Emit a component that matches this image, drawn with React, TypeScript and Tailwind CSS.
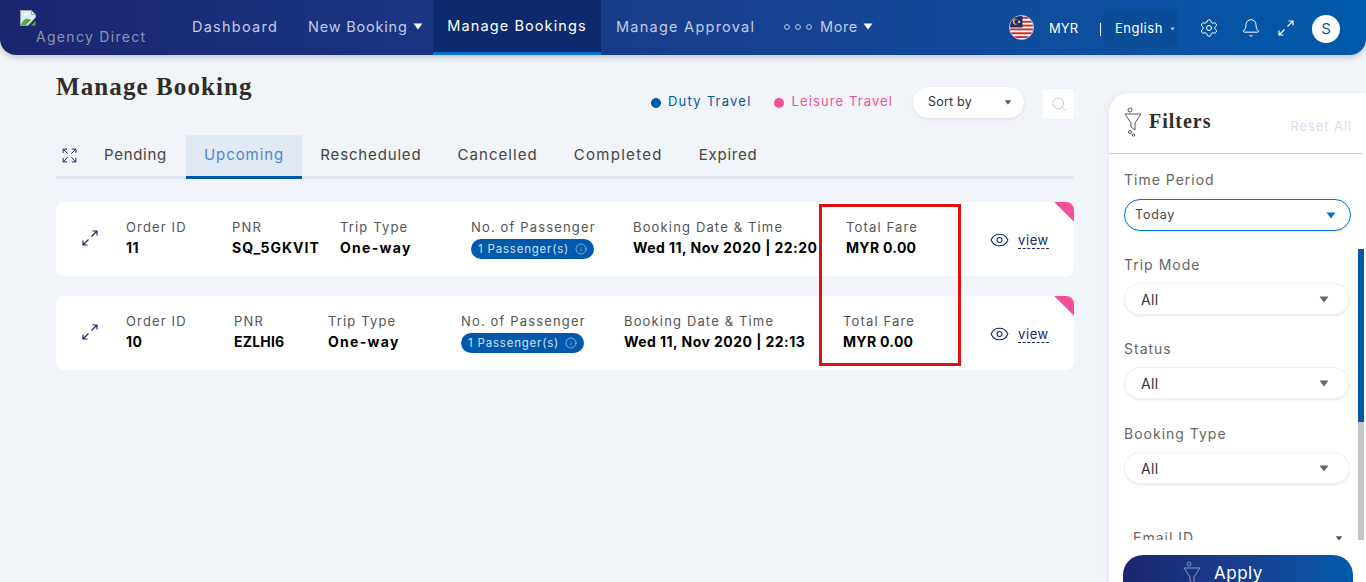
import React from 'react';
import { Search, Settings, Bell, Expand, Eye, Info } from 'lucide-react';

const Caret: React.FC<{ className?: string }> = ({ className }) => (
  <svg viewBox="0 0 10 7" className={className} fill="currentColor">
    <path d="M0.5 0.5h9L5 6.5z" />
  </svg>
);

const FunnelIcon: React.FC<{ className?: string }> = ({ className }) => (
  <svg viewBox="0 0 18 30" className={className} fill="none" stroke="currentColor" strokeWidth="1">
    <circle cx="6" cy="3" r="2" />
    <path d="M1 7h16l-6 9v7l-4-3v-4z" />
    <circle cx="6" cy="25" r="1.5" />
    <circle cx="9.5" cy="28" r="1.2" />
  </svg>
);

const SplitArrows: React.FC<{ className?: string }> = ({ className }) => (
  <svg viewBox="0 0 16 16" className={className} fill="none" stroke="currentColor" strokeWidth="1.2">
    <path d="M9.5 6.5L15 1M10.5 1H15v4.5" />
    <path d="M6.5 9.5L1 15M1 10.5V15h4.5" />
  </svg>
);

const BrokenImage = () => (
  <svg viewBox="0 0 16 16" className="h-4 w-4">
    <path d="M0.5 0.5h11l4 4v3L8 15.5H0.5z" fill="#dfe9f7" stroke="#a3a3a3" />
    <path d="M11.5 0.5v4h4z" fill="#fff" stroke="#a3a3a3" />
    <path d="M3 5c1-2 4-2 5 0z" fill="#fff" />
    <path d="M1 15c1-5 6-8 10-5l-5 5z" fill="#58a93c" />
    <path d="M11 15.5l4.5-5v5z" fill="#58a93c" />
  </svg>
);

const MalaysiaFlag = () => (
  <svg viewBox="0 0 24 24" className="h-[25px] w-[25px] -translate-y-[2px] rounded-full border border-gray-300">
    <rect width="24" height="24" fill="#fff" />
    {[0, 4, 8, 12, 16, 20].map(y => (
      <rect key={y} y={y + 1} width="24" height="2" fill="#cc2a2a" />
    ))}
    <rect width="13" height="12" fill="#1a2a6c" />
    <circle cx="6" cy="6" r="3" fill="#f4c430" />
    <circle cx="7" cy="6" r="2.4" fill="#1a2a6c" />
    <circle cx="9.5" cy="6" r="1.3" fill="#f4c430" />
  </svg>
);

const tabs = [
  { label: 'Pending', className: 'flex items-center pr-[19px] tracking-[0.7px] text-[#444]' },
  { label: 'Upcoming', className: '-mb-[3px] flex items-center border-b-[3px] border-[#0059ab] bg-[#e1e9f4] px-[18px] tracking-[0.95px] text-[#4f86d6]' },
  { label: 'Rescheduled', className: 'flex items-center px-[18px] tracking-[0.85px] text-[#444]' },
  { label: 'Cancelled', className: 'flex items-center px-[18px] tracking-[1.05px] text-[#444]' },
  { label: 'Completed', className: 'flex items-center px-[18px] tracking-[1.3px] text-[#444]' },
  { label: 'Expired', className: 'flex items-center px-[18px] tracking-[0.75px] text-[#444]' },
];

const rows = [
  {
    id: '11', pnr: 'SQ_5GKVIT', pnrClass: 'tracking-[1px]', date: 'Wed 11, Nov 2020 | 22:20',
    w: ['w-[106px]', 'w-[108px]', 'w-[131px]', 'w-[162px]', 'w-[213px]', 'w-[144px]'],
  },
  {
    id: '10', pnr: 'EZLHI6', pnrClass: 'tracking-[0.2px]', date: 'Wed 11, Nov 2020 | 22:13',
    w: ['w-[108px]', 'w-[94px]', 'w-[133px]', 'w-[163px]', 'w-[219px]', 'w-[147px]'],
  },
];

const Cell: React.FC<{ label: string; className: string; children: React.ReactNode }> = ({ label, className, children }) => (
  <div className={`${className} shrink-0 whitespace-nowrap pb-[4px]`}>
    <div className="text-[13px] leading-[20px] tracking-[1.15px] text-[#555]">{label}</div>
    <div className="h-[21px] text-[14px] leading-[21px] font-bold tracking-[0.45px] text-black">{children}</div>
  </div>
);

const FilterSelect: React.FC<{ label: string; className?: string }> = ({ label, className }) => (
  <div className={className}>
    <div className="text-[14px] leading-[20px] tracking-[1px] text-[#666]">{label}</div>
    <div className="mt-[8px] flex h-[33px] items-center justify-between rounded-full border border-b-2 border-[#f3eeee] bg-white pl-[16px] pr-[20px] shadow-[0_1px_3px_rgba(0,0,0,0.05)]">
      <span className="text-[14px] tracking-[0.3px] text-[#333]">All</span>
      <Caret className="h-[7px] w-[10px] text-[#666]" />
    </div>
  </div>
);

export default function App() {
  return (
    <div className="relative h-[582px] overflow-hidden bg-[#f1f4f8] font-['Inter','Liberation_Sans',sans-serif]">
      {/* Top nav */}
      <header className="flex h-[55px] items-stretch rounded-b-[16px] bg-gradient-to-r from-[#1b2570] to-[#0059ab] shadow-[0_2px_6px_rgba(0,0,0,0.2)]">
        <div className="w-[192px] shrink-0 pl-[20px] pt-[10px]">
          <BrokenImage />
          <div className="ml-[16px] mt-[1px] text-[14px] leading-[20px] tracking-[1.3px] text-[#8f93ad]">Agency Direct</div>
        </div>
        <nav className="flex items-stretch text-[14.5px] text-[#c3cbe6]">
          <div className="flex w-[116px] items-center pb-[2px] tracking-[1.25px]">Dashboard</div>
          <div className="flex w-[125px] items-center gap-[5px] pb-[2px] tracking-[0.8px]">
            New Booking <Caret className="h-[7px] w-[10px] text-white" />
          </div>
          <div className="flex w-[168px] items-center justify-center border-b-[3px] border-[#0a6fd6] bg-[#0c2b6e] tracking-[1.1px] text-white">Manage Bookings</div>
          <div className="flex w-[183px] items-center pb-[2px] pl-[15px] tracking-[1.25px]">Manage Approval</div>
          <div className="flex items-center gap-[5px] pb-[2px] tracking-[0.6px]">
            <svg viewBox="0 0 28 6" className="mr-[3px] h-[6px] w-[28px]" fill="none" stroke="currentColor">
              <circle cx="3" cy="3" r="2.4" />
              <circle cx="14" cy="3" r="2.4" />
              <circle cx="25" cy="3" r="2.4" />
            </svg>
            More <Caret className="h-[7px] w-[10px] text-white" />
          </div>
        </nav>
        <div className="ml-auto flex items-center pr-[26px] pt-[3px] text-white">
          <MalaysiaFlag />
          <span className="ml-[15px] text-[13px]">MYR</span>
          <span className="ml-[22px] h-[13px] w-px bg-white" />
          <div className="ml-[2px] flex h-[36px] w-[75px] items-center justify-between rounded-[4px] bg-[#0a4c96] pl-[12px] pr-[3px] text-[13px] tracking-[0.5px] whitespace-nowrap">
            English<Caret className="h-[4px] w-[5px] shrink-0 text-[#b8c5dd]" />
          </div>
          <Settings className="ml-[21px] h-[20px] w-[20px] -translate-y-[1px]" strokeWidth={1.2} />
          <Bell className="ml-[22px] h-[20px] w-[20px] -translate-y-[1px]" strokeWidth={1.2} />
          <SplitArrows className="ml-[17px] h-[16px] w-[16px] -translate-y-[1px]" />
          <div className="ml-[18px] flex h-[28px] w-[28px] items-center justify-center rounded-full bg-white text-[15px] text-[#0059ab]">S</div>
        </div>
      </header>

      <div className="flex items-start pl-[56px]">
        <main className="relative w-[1018px] shrink-0">
          <div className="flex h-[80px] items-start justify-between">
            <h1 className="mt-[17px] font-['Liberation_Serif',serif] text-[25px] leading-[30px] font-bold tracking-[1.1px] text-[#2f2d2a]">Manage Booking</h1>
            <div className="mt-[31px] flex items-center">
              <span className="h-[10px] w-[10px] rounded-full bg-[#0059ab]" />
              <span className="ml-[7px] -translate-y-[1px] text-[13px] tracking-[1.25px] text-[#0059ab]">Duty Travel</span>
              <span className="ml-[22px] h-[10px] w-[10px] rounded-full bg-[#f4509a]" />
              <span className="ml-[8px] -translate-y-[1px] text-[13px] tracking-[1.1px] text-[#f4509a]">Leisure Travel</span>
              <div className="ml-[20px] flex h-[31px] w-[111px] items-center justify-between rounded-full bg-white pl-[15px] pr-[12px] text-[12.5px] tracking-[0.2px] text-[#333] shadow-[0_1px_3px_rgba(120,60,60,0.15)]">
                Sort by <Caret className="h-[5px] w-[8px] text-[#555]" />
              </div>
              <div className="ml-[19px] mt-[3px] flex h-[30px] w-[31px] items-center justify-center rounded-[3px] bg-white">
                <Search className="h-[16px] w-[16px] text-[#bbb]" strokeWidth={1.2} />
              </div>
            </div>
          </div>

          {/* Tabs */}
          <div className="flex h-[44px] items-stretch border-b-[3px] border-[#e1e8f1] text-[15px]">
            <div className="flex w-[48px] shrink-0 items-center pl-[5px]">
              <Expand className="h-[17px] w-[17px] text-[#1b2570]" strokeWidth={1.4} />
            </div>
            {tabs.map(t => (
              <div key={t.label} className={t.className}>{t.label}</div>
            ))}
          </div>

          {/* Booking rows */}
          <div className="mt-[23px] flex flex-col gap-[20px]">
            {rows.map(r => (
              <div key={r.id} className="relative flex h-[74px] items-center overflow-hidden rounded-[8px] bg-white pl-[26px]">
                <SplitArrows className="mr-[28px] h-[16px] w-[16px] shrink-0 -translate-y-[1px] text-[#1b2570]" />
                <Cell label="Order ID" className={r.w[0]}>{r.id}</Cell>
                <Cell label="PNR" className={r.w[1]}><span className={r.pnrClass}>{r.pnr}</span></Cell>
                <Cell label="Trip Type" className={r.w[2]}><span className="tracking-[1.3px]">One-way</span></Cell>
                <Cell label="No. of Passenger" className={r.w[3]}>
                  <span className="mt-[1px] inline-flex h-[20px] items-center gap-[6px] rounded-full bg-[#0059ab] px-[7px] text-[11.5px] leading-[20px] font-normal tracking-[0.8px] text-[#cfe0f3]">
                    1 Passenger(s) <Info className="h-[12px] w-[12px]" strokeWidth={1.2} />
                  </span>
                </Cell>
                <Cell label="Booking Date & Time" className={r.w[4]}>{r.date}</Cell>
                <Cell label="Total Fare" className={r.w[5]}><span className="tracking-[0.3px]">MYR 0.00</span></Cell>
                <div className="flex shrink-0 items-center gap-[8px] pt-[2px] text-[#1b2570]">
                  <Eye className="-ml-[1px] h-[20px] w-[21px]" strokeWidth={1.3} />
                  <span className="border-b border-dashed border-[#1b2570] text-[13px] leading-[16px] tracking-[0.6px]">view</span>
                </div>
                <div className="absolute -right-[14px] -top-[14px] h-[28px] w-[28px] rotate-45 bg-[#f4509a]" />
              </div>
            ))}
          </div>

          {/* Highlight box */}
          <div className="absolute left-[763px] top-[149px] h-[162px] w-[142px] border-[3px] border-[#e01010]" />
        </main>

        <aside className="relative ml-[35px] mt-[38px] h-[489px] w-[257px] shrink-0 overflow-hidden rounded-tl-[20px] bg-white shadow-[-2px_0_6px_rgba(0,0,0,0.05)]">
          <div className="mr-[3px] flex h-[61px] items-start border-b border-[#ccc] pl-[15px]">
            <FunnelIcon className="mt-[14px] h-[30px] w-[18px] text-[#555]" />
            <span className="ml-[7px] mt-[15px] font-['Liberation_Serif',serif] text-[20px] leading-[26px] font-bold tracking-[1px] text-[#2f2d2a]">Filters</span>
            <span className="ml-auto mr-[11px] mt-[24px] text-[13px] tracking-[0.9px] text-[#dedcec]">Reset All</span>
          </div>
          <div className="h-[386px] overflow-hidden pl-[15px] pr-[16px] pt-[16px]">
            <div className="text-[14px] leading-[20px] tracking-[1px] text-[#666]">Time Period</div>
            <div className="mt-[9px] flex h-[32px] w-[227px] items-center justify-between rounded-full border border-[#0a6fd6] pl-[10px] pr-[14px] shadow-[0_1px_3px_rgba(0,0,0,0.1)]">
              <span className="text-[12.5px] tracking-[0.8px] text-[#444]">Today</span>
              <Caret className="h-[7px] w-[10px] text-[#0a6fd6]" />
            </div>
            <FilterSelect label="Trip Mode" className="mt-[24px] w-[226px]" />
            <FilterSelect label="Status" className="mt-[23px] w-[226px]" />
            <FilterSelect label="Booking Type" className="mt-[24px] w-[226px]" />
            <div className="mt-[43px] flex w-[219px] items-center justify-between pl-[9px] text-[14px] leading-[20px] tracking-[1px] text-[#666]">
              Email ID <Caret className="h-[5px] w-[8px] text-[#555]" />
            </div>
          </div>
          <div className="ml-[14px] mt-[15px] flex h-[40px] w-[230px] items-start gap-[13px] rounded-t-[20px] bg-gradient-to-r from-[#1b2570] to-[#0059ab] pl-[60px] pt-[6px] text-[17px] tracking-[0.5px] text-white">
            <FunnelIcon className="h-[30px] w-[18px] text-[#8d96c4]" />
            <span>Apply</span>
          </div>
          {/* scrollbar */}
          <div className="absolute right-[2px] top-[156px] flex h-[291px] w-[6px] flex-col bg-[#c4c4c4]">
            <div className="h-[173px] bg-[#0059ab]" />
          </div>
        </aside>
      </div>
    </div>
  );
}
